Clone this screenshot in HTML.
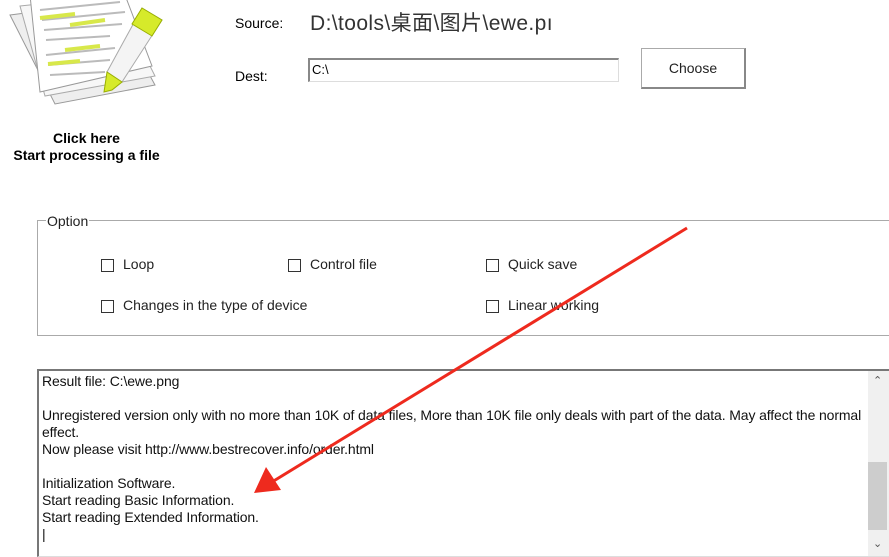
<!DOCTYPE html>
<html><head><meta charset="utf-8"><style>
body{margin:0;width:889px;height:557px;background:#fff;position:relative;overflow:hidden;font-family:"Liberation Sans","Noto Sans CJK SC",sans-serif;font-size:14px;color:#000}
.a{position:absolute}
.cb{position:absolute;width:13px;height:13px;border:1px solid #333;background:#fff;box-sizing:border-box}
.lbl{position:absolute;font-size:14px;color:#222}
</style></head><body>
<svg class="a" style="left:0;top:0" width="175" height="110" viewBox="0 0 175 110">
<polygon points="10,15 110,2 155,85 55,104" fill="#eee" stroke="#999"/>
<polygon points="20,6 115,-4 155,76 45,96" fill="#f7f7f7" stroke="#aaa"/>
<polygon points="30,-5 125,-5 152,66 40,92" fill="#fff" stroke="#999"/>
<g stroke="#bbb" stroke-width="2">
<line x1="40" y1="10" x2="120" y2="2"/><line x1="42" y1="20" x2="125" y2="12"/><line x1="44" y1="30" x2="122" y2="24"/><line x1="46" y1="40" x2="110" y2="36"/><line x1="46" y1="55" x2="115" y2="48"/><line x1="48" y1="65" x2="110" y2="60"/><line x1="50" y1="75" x2="105" y2="72"/></g>
<g stroke="#d8e84a" stroke-width="4"><line x1="40" y1="18" x2="75" y2="14"/><line x1="70" y1="25" x2="105" y2="20"/><line x1="65" y1="50" x2="100" y2="46"/><line x1="48" y1="64" x2="80" y2="61"/></g>
<polygon points="142,8 162,20 122,82 107,72" fill="#f4f4f4" stroke="#aaa"/>
<polygon points="142,8 162,20 152,36 132,24" fill="#d6ea2a" stroke="#9ab000"/>
<polygon points="107,72 122,82 112,90 104,92" fill="#d6ea2a" stroke="#9ab000"/>
</svg>
<div class="a" style="left:0;width:173px;top:130px;text-align:center;font-weight:bold;font-size:14px;line-height:17px">Click here<br>Start processing a file</div>
<div class="a" style="left:235px;top:15px;font-size:14px">Source:</div>
<div class="a" style="left:310px;top:7px;font-size:21px;letter-spacing:0.4px;color:#333">D:\tools\桌面\图片\ewe.pı</div>
<div class="a" style="left:235px;top:68px;font-size:14px">Dest:</div>
<div class="a" style="left:308px;top:58px;width:311px;height:24px;box-sizing:border-box;border:1px solid #ddd;border-top:2px solid #888;border-left:2px solid #888;font-size:13px;padding:2px 2px">C:\</div>
<div class="a" style="left:641px;top:48px;width:105px;height:41px;box-sizing:border-box;border:1px solid #aaa;border-right:2px solid #888;border-bottom:2px solid #888;text-align:center;line-height:38px;font-size:14px;color:#222">Choose</div>
<div class="a" style="left:37px;top:220px;width:852px;height:116px;box-sizing:border-box;border:1px solid #aaa;border-right:none"></div>
<div class="a" style="left:46px;top:213px;background:#fff;padding:0 1px;font-size:14px;color:#222">Option</div>
<div class="cb" style="left:101px;top:259px"></div><div class="lbl" style="left:123px;top:256px">Loop</div>
<div class="cb" style="left:288px;top:259px"></div><div class="lbl" style="left:310px;top:256px">Control file</div>
<div class="cb" style="left:486px;top:259px"></div><div class="lbl" style="left:508px;top:256px">Quick save</div>
<div class="cb" style="left:101px;top:300px"></div><div class="lbl" style="left:123px;top:297px">Changes in the type of device</div>
<div class="cb" style="left:486px;top:300px"></div><div class="lbl" style="left:508px;top:297px">Linear working</div>
<div class="a" style="left:37px;top:369px;width:852px;height:188px;box-sizing:border-box;border-top:2px solid #777;border-left:2px solid #777;border-bottom:1px solid #ddd"></div>
<div class="a" style="left:868px;top:371px;width:21px;height:185px;background:#f0f0f0"></div>
<div class="a" style="left:868px;top:462px;width:19px;height:68px;background:#cdcdcd"></div>
<div class="a" style="left:873px;top:374px;font-size:11px;color:#555">&#8963;</div>
<div class="a" style="left:873px;top:537px;font-size:11px;color:#555">&#8964;</div>
<div class="a" style="left:42px;top:373px;font-size:14px;line-height:17px;color:#111;white-space:nowrap;letter-spacing:-0.12px">Result file: C:\ewe.png<br><br>Unregistered version only with no more than 10K of data files, More than 10K file only deals with part of the data. May affect the normal<br>effect.<br>Now please visit http://www.bestrecover.info/order.html<br><br>Initialization Software.<br>Start reading Basic Information.<br>Start reading Extended Information.<br>|</div>
<svg class="a" style="left:0;top:0" width="889" height="557">
<line x1="687" y1="228" x2="272" y2="482" stroke="#ee2a1e" stroke-width="3"/>
<polygon points="254,493 266,467 281,490" fill="#ee2a1e"/>
</svg>
</body></html>
